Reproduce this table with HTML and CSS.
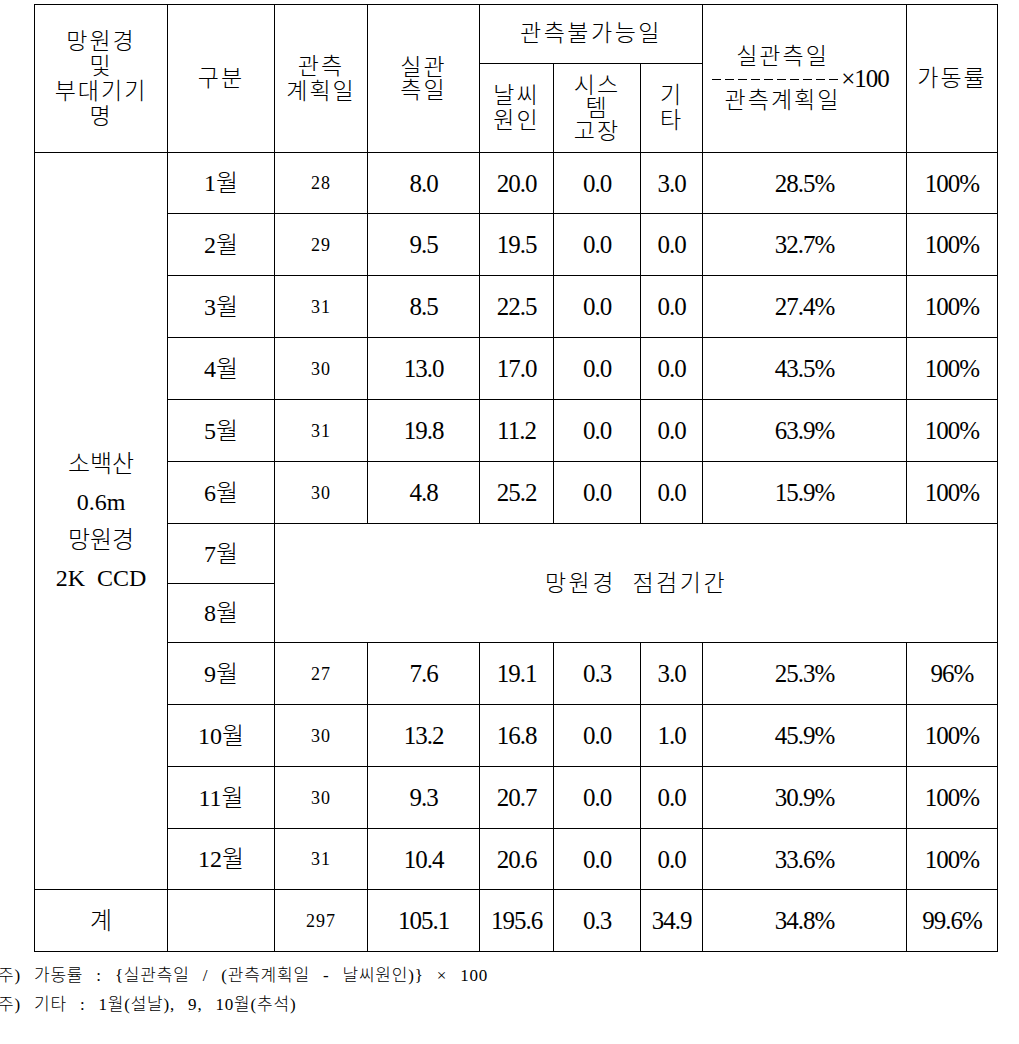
FILE: index.html
```html
<!DOCTYPE html>
<html lang="ko">
<head>
<meta charset="utf-8">
<title>망원경 가동률</title>
<link rel="stylesheet" href="styles.css">
</head>
<body>
<div class="page">
<table class="grid">
  <colgroup>
    <col class="c1"><col class="c2"><col class="c3"><col class="c4"><col class="c5"><col class="c6"><col class="c7"><col class="c8"><col class="c9">
  </colgroup>
  <tr class="h1">
    <td class="hd" rowspan="2"><div class="stack tall">망원경<br>및<br>부대기기<br>명</div></td>
    <td class="hd" rowspan="2">구분</td>
    <td class="hd" rowspan="2"><div class="stack">관측<br>계획일</div></td>
    <td class="hd" rowspan="2"><div class="stack tight">실관<br>측일</div></td>
    <td class="hd wide" colspan="3">관측불가능일</td>
    <td class="hd" rowspan="2">
      <div class="formula">
        <div class="frac">실관측일</div>
        <div class="bar"><span class="rule"></span><span class="times">×100</span></div>
        <div class="frac">관측계획일</div>
      </div>
    </td>
    <td class="hd" rowspan="2">가동률</td>
  </tr>
  <tr class="h2">
    <td class="hd"><div class="stack">날씨<br>원인</div></td>
    <td class="hd"><div class="stack tight">시스<br>템<br>고장</div></td>
    <td class="hd"><div class="stack">기<br>타</div></td>
  </tr>
  <tr class="r61">
    <td class="name" rowspan="12"><div class="stack loose">소백산<br>0.6m<br>망원경<br>2K&nbsp;&nbsp;CCD</div></td>
    <td class="m">1월</td><td class="s">28</td><td>8.0</td><td>20.0</td><td>0.0</td><td>3.0</td><td>28.5%</td><td>100%</td>
  </tr>
  <tr><td class="m">2월</td><td class="s">29</td><td>9.5</td><td>19.5</td><td>0.0</td><td>0.0</td><td>32.7%</td><td>100%</td></tr>
  <tr><td class="m">3월</td><td class="s">31</td><td>8.5</td><td>22.5</td><td>0.0</td><td>0.0</td><td>27.4%</td><td>100%</td></tr>
  <tr><td class="m">4월</td><td class="s">30</td><td>13.0</td><td>17.0</td><td>0.0</td><td>0.0</td><td>43.5%</td><td>100%</td></tr>
  <tr><td class="m">5월</td><td class="s">31</td><td>19.8</td><td>11.2</td><td>0.0</td><td>0.0</td><td>63.9%</td><td>100%</td></tr>
  <tr><td class="m">6월</td><td class="s">30</td><td>4.8</td><td>25.2</td><td>0.0</td><td>0.0</td><td>15.9%</td><td>100%</td></tr>
  <tr class="r60">
    <td class="m">7월</td>
    <td class="check" colspan="7" rowspan="2">망원경&nbsp;&nbsp;점검기간</td>
  </tr>
  <tr class="r59"><td class="m">8월</td></tr>
  <tr><td class="m">9월</td><td class="s">27</td><td>7.6</td><td>19.1</td><td>0.3</td><td>3.0</td><td>25.3%</td><td>96%</td></tr>
  <tr><td class="m">10월</td><td class="s">30</td><td>13.2</td><td>16.8</td><td>0.0</td><td>1.0</td><td>45.9%</td><td>100%</td></tr>
  <tr><td class="m">11월</td><td class="s">30</td><td>9.3</td><td>20.7</td><td>0.0</td><td>0.0</td><td>30.9%</td><td>100%</td></tr>
  <tr class="r61"><td class="m">12월</td><td class="s">31</td><td>10.4</td><td>20.6</td><td>0.0</td><td>0.0</td><td>33.6%</td><td>100%</td></tr>
  <tr>
    <td class="m">계</td><td></td><td class="s">297</td><td>105.1</td><td>195.6</td><td>0.3</td><td>34.9</td><td>34.8%</td><td>99.6%</td>
  </tr>
</table>
<div class="notes">
  <p>주) 가동률 : {실관측일 / (관측계획일 - 날씨원인)} × 100</p>
  <p>주) 기타 : 1월(설날), 9, 10월(추석)</p>
</div>
</div>
</body>
</html>
```

FILE: styles.css
```css
html, body {
  margin: 0;
  padding: 0;
  background: #fff;
}

body {
  font-family: "Liberation Serif", "Noto Sans CJK KR", serif;
  font-weight: 300;
  color: #000;
}

.page {
  padding: 4px 0 0 34px;
}

.grid {
  border-collapse: collapse;
  table-layout: fixed;
  width: 963px;
}

.c1 { width: 133px; }
.c2 { width: 107px; }
.c3 { width: 93px; }
.c4 { width: 112px; }
.c5 { width: 74px; }
.c6 { width: 87px; }
.c7 { width: 62px; }
.c8 { width: 204px; }
.c9 { width: 91px; }

.grid td {
  border: 1.5px solid #000;
  padding: 0;
  height: 61px;
  text-align: center;
  vertical-align: middle;
  font-size: 25px;
  font-weight: 300;
  letter-spacing: -1px;
  line-height: 1;
}

.grid tr.r61 td { height: 60px; }
.grid tr.r60 td { height: 59px; }
.grid tr.r59 td { height: 58px; }
.grid tr.h1 td { height: 58px; }
.grid tr.h2 td { height: 88px; }

.grid td.hd {
  font-size: 23px;
  letter-spacing: 2px;
  line-height: 24px;
}

.grid td.hd.wide {
  letter-spacing: 2.5px;
}

.stack { line-height: 25px; }
.stack.tall { line-height: 25px; }
.stack.tight { line-height: 23px; }
.stack.loose {
  line-height: 38px;
  font-size: 24px;
  letter-spacing: 0;
}

.grid td.name {
  font-size: 24px;
  letter-spacing: 0;
}

.grid td.m {
  font-size: 24px;
  letter-spacing: 0;
}

.grid td.s {
  font-size: 18px;
  letter-spacing: 1px;
}

.grid td.check {
  font-size: 23px;
  letter-spacing: 2.5px;
}

.formula {
  line-height: 22px;
}

.formula .frac {
  padding-right: 44px;
}

.formula .bar {
  display: flex;
  justify-content: center;
  align-items: center;
  letter-spacing: 0;
  height: 22px;
  padding-right: 8px;
}

.rule {
  display: block;
  width: 129px;
  height: 1.5px;
  margin-top: 2px;
  background: repeating-linear-gradient(to right, #000 0, #000 9px, transparent 9px, transparent 13px);
}

.times {
  font-size: 25px;
  line-height: 22px;
  letter-spacing: -1px;
}

.notes {
  margin: 9px 0 0 -36px;
  font-size: 17px;
  letter-spacing: 0.8px;
  word-spacing: 8px;
  line-height: 29px;
}

.notes p {
  margin: 0;
}
```
